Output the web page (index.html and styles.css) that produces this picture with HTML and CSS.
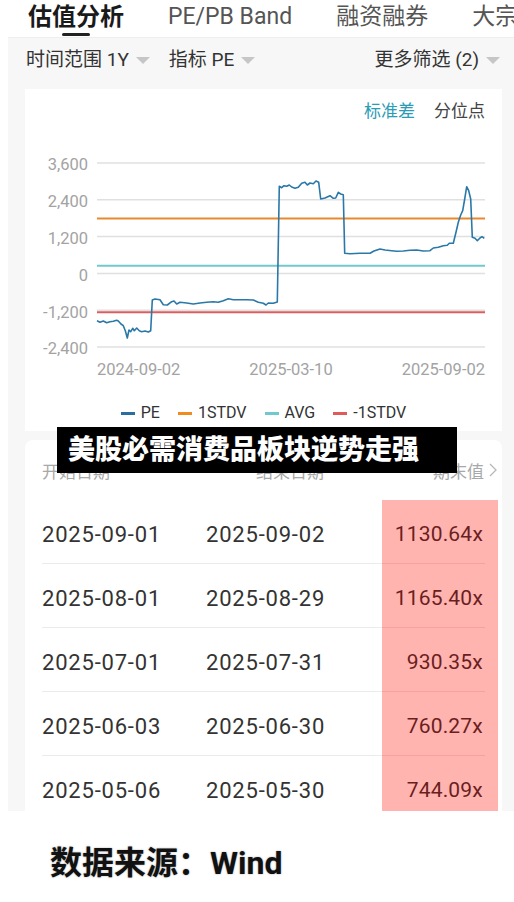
FILE: index.html
```html
<!DOCTYPE html>
<html>
<head>
  <title>估值分析</title>
  <meta name="viewport" content="width=device-width, initial-scale=1.0" />
  <link rel="stylesheet" href="styles.css">
</head>
<body>
  <div class="shot">
    <div class="tabs">
      <span class="tab active">估值分析</span>
      <span class="tab">PE/PB Band</span>
      <span class="tab">融资融券</span>
      <span class="tab">大宗交易</span>
    </div>

    <div class="panel">
      <div class="filters">
        <span class="filter">时间范围 1Y<i class="caret"></i></span>
        <span class="filter">指标 PE<i class="caret"></i></span>
        <span class="filter more">更多筛选 (2)<i class="caret"></i></span>
      </div>

      <div class="card chart-card">
        <div class="modes">
          <span class="mode on">标准差</span>
          <span class="mode">分位点</span>
        </div>

        <svg class="chart" viewBox="25 140 477 252" width="477" height="252">
          <g class="grid">
            <line x1="97" x2="485" y1="164" y2="164" />
            <line x1="97" x2="485" y1="200.8" y2="200.8" />
            <line x1="97" x2="485" y1="237.6" y2="237.6" />
            <line x1="97" x2="485" y1="274.4" y2="274.4" />
            <line x1="97" x2="485" y1="311.2" y2="311.2" />
            <line x1="97" x2="485" y1="348" y2="348" />
          </g>
          <g class="ylabels">
            <text x="88" y="171">3,600</text>
            <text x="88" y="208">2,400</text>
            <text x="88" y="245">1,200</text>
            <text x="88" y="282">0</text>
            <text x="88" y="319">-1,200</text>
            <text x="88" y="355">-2,400</text>
          </g>
          <g class="xlabels">
            <text x="97" y="376" text-anchor="start">2024-09-02</text>
            <text x="291" y="376" text-anchor="middle">2025-03-10</text>
            <text x="485" y="376" text-anchor="end">2025-09-02</text>
          </g>
          <line class="stdv" x1="97" x2="485" y1="219.4" y2="219.4" />
          <line class="avg" x1="97" x2="485" y1="266.7" y2="266.7" />
          <line class="nstdv" x1="97" x2="485" y1="313.3" y2="313.3" />
          <polyline class="pe" points="97,321.7 100,323.3 103.3,322 106.7,323.7 110,322.7 113.3,322.3 116.7,321.3 118.3,322 121,325 123.3,326.7 125.3,331.7 127.3,339 129,331 130.7,332.7 132.7,329.3 134.3,331.7 136.7,329 139.3,331.7 141.7,332.7 145,332 148.3,333 150.7,331.7 152.3,301 155,300 160,300.7 163.3,305.7 167.3,306 171.7,302.7 174,302 176.7,305 180,303.3 186.7,304 193.3,305 200,304 206.7,303.3 213.3,302.7 218.3,303.3 223.3,301.7 228.3,299.7 233.3,300.7 240,300.7 246.7,300.7 253.3,301 258.3,303.3 263.3,304.3 266,306 268.3,304 273.3,304.3 277.3,303 279.3,187.3 281.7,188.7 284,186.7 286.7,187.3 289.3,186 291.7,188 295,189.3 298.3,188.3 301.7,184.3 305,183.3 307.3,186 310,184 313.3,184.7 316,182 318.7,183.3 320.7,200 325,199 330,196.7 333.3,199.3 335.7,199 338.3,193.3 340.7,195 343.3,195.7 344.7,254.3 350,254.7 360,254.3 370,254.3 374,252 380,250 385,251 391.7,251.7 396.7,252.3 403.3,252 410,251.3 416.7,251 423.3,252 430,251.7 433.3,249 438.3,248.3 443.3,246.7 447.3,246.3 449.3,244.3 453.3,244.3 456,233.3 458.3,223.3 460.7,216 462.7,211.7 464.7,200 466.7,187.7 468.7,191.7 470.7,200 472.3,238.3 475,239.3 477.3,241.7 480,239 482,237.7 484.3,239.3" />
        </svg>

        <div class="legend">
          <span class="key"><i class="swatch pe-key"></i>PE</span>
          <span class="key"><i class="swatch stdv-key"></i>1STDV</span>
          <span class="key"><i class="swatch avg-key"></i>AVG</span>
          <span class="key"><i class="swatch nstdv-key"></i>-1STDV</span>
        </div>
      </div>

      <div class="card table-card">
        <div class="thead">
          <span class="th start">开始日期</span>
          <span class="th end">结束日期</span>
          <span class="th value">期末值
            <svg class="chev" width="8" height="14" viewBox="0 0 8 14"><polyline points="1,1 7,7 1,13" /></svg>
          </span>
        </div>
        <div class="row">
          <span class="d1">2025-09-01</span><span class="d2">2025-09-02</span><span class="val">1130.64x</span>
        </div>
        <div class="row">
          <span class="d1">2025-08-01</span><span class="d2">2025-08-29</span><span class="val">1165.40x</span>
        </div>
        <div class="row">
          <span class="d1">2025-07-01</span><span class="d2">2025-07-31</span><span class="val">930.35x</span>
        </div>
        <div class="row">
          <span class="d1">2025-06-03</span><span class="d2">2025-06-30</span><span class="val">760.27x</span>
        </div>
        <div class="row">
          <span class="d1">2025-05-06</span><span class="d2">2025-05-30</span><span class="val">744.09x</span>
        </div>
      </div>
    </div>
  </div>

  <div class="banner">美股必需消费品板块逆势走强</div>

  <p class="source">数据来源：Wind</p>
</body>
</html>
```

FILE: styles.css
```css
html, body { margin: 0; padding: 0; background: #fff; }
body { position: relative; width: 514px; overflow: hidden; font-family: Roboto, "Noto Sans CJK SC", sans-serif; color: #333; }

.shot { margin-left: 8px; width: 506px; height: 811px; overflow: hidden; background: #f7f7f7; }

.tabs { display: flex; gap: 44px; height: 38px; padding-left: 20px; background: #fff; border-bottom: 1px solid #eeeeee; white-space: nowrap; overflow: hidden; box-sizing: border-box; }
.tab { display: flex; flex-direction: column; align-items: center; padding-top: 2px; line-height: 30px; font-size: 23px; color: #555; }
.tab.active { font-size: 24px; font-weight: 700; color: #1a1a1a; }
.tab.active::after { content: ""; width: 28px; height: 3px; margin-top: 1px; border-radius: 2px; background: #222; }

.filters { display: flex; align-items: center; height: 51px; padding: 0 14px 7px 18px; box-sizing: border-box; font-size: 19px; line-height: 24px; color: #333; }
.filter { display: flex; align-items: center; margin-right: 19px; white-space: nowrap; }
.filter.more { margin-left: auto; margin-right: 0; }
.caret { width: 0; height: 0; margin-left: 7px; border-left: 7px solid transparent; border-right: 7px solid transparent; border-top: 7px solid #c6c6c6; }

.card { margin: 0 12px 0 17px; background: #fff; }

.chart-card { height: 342px; }
.modes { display: flex; justify-content: flex-end; gap: 19px; padding: 12px 17px 0 0; font-size: 17px; line-height: 20px; color: #444; }
.mode.on { color: #2a9cb6; }
.chart { display: block; margin-top: 18px; }
.grid line { stroke: #e0e0e0; stroke-width: 1.5; }
.ylabels text { font-size: 16.5px; fill: #a3a3a3; text-anchor: end; }
.xlabels text { font-size: 16.5px; fill: #a3a3a3; }
.stdv { stroke: #e88a2c; stroke-width: 2; }
.avg { stroke: #72c9cd; stroke-width: 2; }
.nstdv { stroke: #dc5d5d; stroke-width: 2; }
.pe { fill: none; stroke: #2a78a8; stroke-width: 1.6; stroke-linejoin: round; }

.legend { display: flex; justify-content: center; gap: 18px; margin-top: 12px; font-size: 16px; line-height: 20px; color: #333; }
.key { display: flex; align-items: center; }
.swatch { width: 14px; height: 3px; margin-right: 6px; }
.pe-key { background: #2a6e9e; }
.stdv-key { background: #f08c1e; }
.avg-key { background: #72c9cd; }
.nstdv-key { background: #e05a5a; }

.table-card { margin-top: 9px; border-radius: 8px 8px 0 0; }
.thead { display: flex; align-items: center; height: 60px; padding: 0 5px 0 17px; font-size: 17px; color: #a8a8a8; }
.th.start { width: 214px; }
.th.end { flex: 1; }
.th.value { display: flex; align-items: center; gap: 5px; }
.chev { fill: none; stroke: #b8b8b8; stroke-width: 1.3; }

.row { display: flex; align-items: center; height: 64px; padding-left: 17px; font-size: 22px; letter-spacing: 0.8px; color: #333;
  background: linear-gradient(#ebebeb, #ebebeb) 17px 100% / 443px 1px no-repeat; }
.d1 { width: 164px; padding-top: 4px; }
.d2 { flex: 1; padding-top: 4px; }
.val { align-self: stretch; display: flex; align-items: center; justify-content: flex-end; width: 116px; margin-right: 4px; padding: 4px 15px 0 0; box-sizing: border-box;
  font-size: 21px; letter-spacing: 0.2px; color: #6b1e1e;
  background: linear-gradient(#f3a29e, #f3a29e) 0 100% / 103px 1px no-repeat, #ffb4b0; }
.row:first-of-type .val { background: linear-gradient(#f3a29e, #f3a29e) 0 100% / 103px 1px no-repeat, linear-gradient(transparent 20px, #ffb4b0 20px); }

.banner { position: absolute; left: 57px; top: 427px; width: 400px; height: 46px; padding-left: 11px; box-sizing: border-box; background: #000; color: #fff;
  font-size: 27px; font-weight: 900; line-height: 46px; white-space: nowrap; }

.source { margin: 32px 0 0 50px; font-size: 32px; font-weight: 700; line-height: 40px; color: #111; text-shadow: 0 0 2px rgba(0, 0, 0, 0.35); }
```
